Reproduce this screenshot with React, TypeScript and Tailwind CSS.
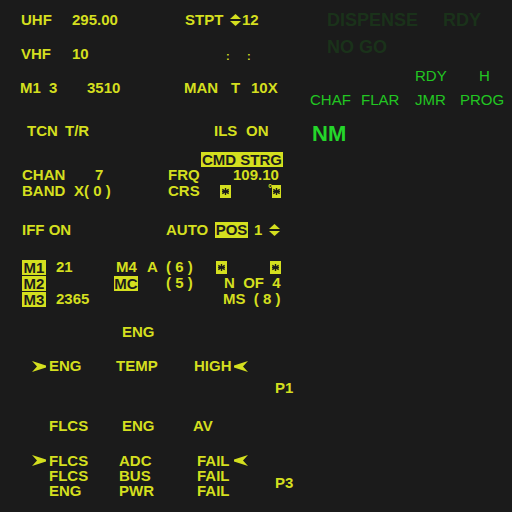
const Y = 'text-[#d4df1f]';

function UpDown() {
  return (
    <svg width="11" height="12" viewBox="0 0 11 12" className="shrink-0">
      <polygon points="0,5 5.5,0 11,5" fill="#d4df1f" />
      <polygon points="0,7 5.5,12 11,7" fill="#d4df1f" />
    </svg>
  );
}

function ArrowRight() {
  return (
    <svg width="14" height="11" viewBox="0 0 14 11" className="shrink-0">
      <polygon points="0,0 14,4.5 14,6.5 0,11 5,5.5" fill="#d4df1f" />
    </svg>
  );
}

function ArrowLeft() {
  return (
    <svg width="15" height="11" viewBox="0 0 15 11" className="shrink-0">
      <polygon points="15,0 1,4.5 1,6.5 15,11 10,5.5" fill="#d4df1f" />
    </svg>
  );
}

function Star({ w = 11 }: { w?: number }) {
  return (
    <svg width={w} height="13" viewBox={`0 0 ${w} 13`} className="shrink-0">
      <rect width={w} height="13" fill="#d4df1f" />
      <g stroke="#1b1b1b" strokeWidth="1.4">
        <line x1={w / 2} y1="3" x2={w / 2} y2="10" />
        <line x1={w / 2 - 3.2} y1="4.3" x2={w / 2 + 3.2} y2="8.7" />
        <line x1={w / 2 + 3.2} y1="4.3" x2={w / 2 - 3.2} y2="8.7" />
        <line x1={w / 2 - 3.5} y1="6.5" x2={w / 2 + 3.5} y2="6.5" />
      </g>
    </svg>
  );
}

function Box({ children, w }: { children: string; w: string }) {
  return (
    <span className={`${w} h-[15px] leading-[15px] bg-[#d4df1f] text-[#1b1b1b] text-center shrink-0`}>
      {children}
    </span>
  );
}

function LeftPanel() {
  const row = 'flex items-center h-[16px] leading-[16px] whitespace-pre';
  return (
    <div className={`w-[300px] shrink-0 flex flex-col pt-[12px] text-[15px] font-bold ${Y}`}>
      <div className={`${row} pl-[21px]`}>
        <span className="w-[51px] shrink-0">UHF</span>
        <span className="w-[113px] shrink-0">295.00</span>
        <span className="w-[45px] shrink-0">STPT</span>
        <span className="w-[12px] shrink-0 flex"><UpDown /></span>
        <span>12</span>
      </div>
      <div className={`${row} pl-[21px] mt-[18px]`}>
        <span className="w-[51px] shrink-0">VHF</span>
        <span className="w-[154px] shrink-0">10</span>
        <span className="w-[21px] shrink-0 text-[11px] pt-[4px]">:</span>
        <span className="text-[11px] pt-[4px]">:</span>
      </div>
      <div className={`${row} pl-[20px] mt-[18px]`}>
        <span className="w-[29px] shrink-0">M1</span>
        <span className="w-[38px] shrink-0">3</span>
        <span className="w-[97px] shrink-0">3510</span>
        <span className="w-[47px] shrink-0">MAN</span>
        <span className="w-[20px] shrink-0">T</span>
        <span>10X</span>
      </div>
      <div className={`${row} pl-[27px] mt-[27px]`}>
        <span className="w-[38px] shrink-0">TCN</span>
        <span className="w-[149px] shrink-0">T/R</span>
        <span className="w-[32px] shrink-0">ILS</span>
        <span>ON</span>
      </div>
      <div className="flex h-[15px] pl-[201px] mt-[13px]">
        <Box w="w-[82px]">CMD STRG</Box>
      </div>
      <div className={`${row} pl-[22px]`}>
        <span className="w-[73px] shrink-0">CHAN</span>
        <span className="w-[73px] shrink-0">7</span>
        <span className="w-[65px] shrink-0">FRQ</span>
        <span>109.10</span>
      </div>
      <div className={`${row} pl-[22px]`}>
        <span className="w-[52px] shrink-0">BAND</span>
        <span className="w-[94px] shrink-0">X( 0 )</span>
        <span className="w-[52px] shrink-0">CRS</span>
        <Star />
        <span className="w-[37px] shrink-0" />
        <span className="w-[4px] shrink-0 text-[11px] leading-[10px] self-start">°</span>
        <Star w={9} />
      </div>
      <div className={`${row} pl-[22px] mt-[23px]`}>
        <span className="w-[144px] shrink-0">IFF ON</span>
        <span className="w-[49px] shrink-0">AUTO</span>
        <span className="w-[33px] h-[16px] bg-[#d4df1f] text-[#1b1b1b] text-center shrink-0">POS</span>
        <span className="w-[6px] shrink-0" />
        <span className="w-[15px] shrink-0">1</span>
        <UpDown />
      </div>
      <div className={`${row} pl-[22px] mt-[21px]`}>
        <Box w="w-[24px]">M1</Box>
        <span className="w-[10px] shrink-0" />
        <span className="w-[60px] shrink-0">21</span>
        <span className="w-[31px] shrink-0">M4</span>
        <span className="w-[19px] shrink-0">A</span>
        <span className="w-[50px] shrink-0">( 6 )</span>
        <Star />
        <span className="w-[43px] shrink-0" />
        <Star />
      </div>
      <div className={`${row} pl-[22px]`}>
        <Box w="w-[24px]">M2</Box>
        <span className="w-[68px] shrink-0" />
        <Box w="w-[24px]">MC</Box>
        <span className="w-[28px] shrink-0" />
        <span className="w-[58px] shrink-0">( 5 )</span>
        <span>N  OF  4</span>
      </div>
      <div className={`${row} pl-[22px]`}>
        <Box w="w-[24px]">M3</Box>
        <span className="w-[10px] shrink-0" />
        <span className="w-[167px] shrink-0">2365</span>
        <span>MS  ( 8 )</span>
      </div>
      <div className={`${row} pl-[122px] mt-[17px]`}>
        <span>ENG</span>
      </div>
      <div className={`${row} pl-[32px] mt-[18px]`}>
        <span className="w-[17px] shrink-0 flex"><ArrowRight /></span>
        <span className="w-[67px] shrink-0">ENG</span>
        <span className="w-[78px] shrink-0">TEMP</span>
        <span className="w-[39px] shrink-0">HIGH</span>
        <ArrowLeft />
      </div>
      <div className={`${row} pl-[275px] mt-[6px]`}>
        <span>P1</span>
      </div>
      <div className={`${row} pl-[49px] mt-[22px]`}>
        <span className="w-[73px] shrink-0">FLCS</span>
        <span className="w-[71px] shrink-0">ENG</span>
        <span>AV</span>
      </div>
      <div className="flex mt-[19px]">
        <div className="w-[275px] shrink-0 flex flex-col pl-[32px]">
          <div className="flex items-center h-[15px] leading-[15px]">
            <span className="w-[17px] shrink-0 flex"><ArrowRight /></span>
            <span className="w-[70px] shrink-0">FLCS</span>
            <span className="w-[78px] shrink-0">ADC</span>
            <span className="w-[36px] shrink-0">FAIL</span>
            <ArrowLeft />
          </div>
          <div className="flex items-center h-[15px] leading-[15px] pl-[17px]">
            <span className="w-[70px] shrink-0">FLCS</span>
            <span className="w-[78px] shrink-0">BUS</span>
            <span>FAIL</span>
          </div>
          <div className="flex items-center h-[15px] leading-[15px] pl-[17px]">
            <span className="w-[70px] shrink-0">ENG</span>
            <span className="w-[78px] shrink-0">PWR</span>
            <span>FAIL</span>
          </div>
        </div>
        <div className="pt-[22px] leading-[16px]">P3</div>
      </div>
    </div>
  );
}

function RightPanel() {
  return (
    <div className="flex-1 flex flex-col pt-[10px]">
      <div className="flex h-[20px] leading-[20px] text-[18px] font-bold text-[#1a321a] pl-[27px]">
        <span className="w-[116px] shrink-0">DISPENSE</span>
        <span>RDY</span>
      </div>
      <div className="flex h-[20px] leading-[20px] text-[18px] font-bold text-[#1a321a] pl-[27px] mt-[7px]">
        <span>NO GO</span>
      </div>
      <div className="flex h-[16px] leading-[16px] text-[15px] text-[#22c622] pl-[115px] mt-[11px]">
        <span className="w-[64px] shrink-0">RDY</span>
        <span>H</span>
      </div>
      <div className="flex h-[16px] leading-[16px] text-[15px] text-[#22c622] pl-[10px] mt-[8px]">
        <span className="w-[51px] shrink-0">CHAF</span>
        <span className="w-[54px] shrink-0">FLAR</span>
        <span className="w-[45px] shrink-0">JMR</span>
        <span>PROG</span>
      </div>
      <div className="flex h-[24px] leading-[24px] text-[22px] font-bold text-[#24d62a] pl-[12px] mt-[14px]">
        <span>NM</span>
      </div>
    </div>
  );
}

export default function App() {
  return (
    <div className="w-[512px] h-[512px] overflow-hidden bg-[#1b1b1b] flex font-['Liberation_Sans',Arial,sans-serif]">
      <LeftPanel />
      <RightPanel />
    </div>
  );
}
